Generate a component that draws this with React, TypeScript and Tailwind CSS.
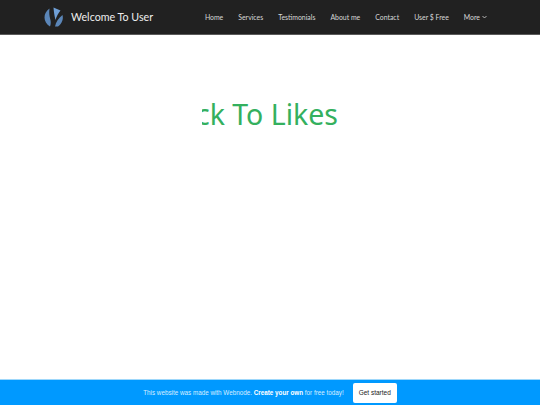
const links = ['Home', 'Services', 'Testimonials', 'About me', 'Contact', 'User $ Free']

function Logo() {
  return (
    <svg width="20" height="20" viewBox="0 0 20 20" className="shrink-0">
      <path d="M5.5 1.5C2 4 0.5 7 0.5 10.5C0.5 14 2.5 17.500 6 19.500C7 17 7 14.500 6.200 12C5.300 9 5 5 5.500 1.500Z" fill="#5b86b8" />
      <path d="M9.500 0.500L16.500 3.500C14.500 6 12.500 9 11.500 13C10.500 9 9.800 5 9.500 0.500Z" fill="#6f9fd6" />
      <path d="M18.500 8C19.500 11.500 18.500 16 14 19.500L11 19.500C11.800 15 14.500 11 18.500 8Z" fill="#5b86b8" />
    </svg>
  )
}

export default function App() {
  return (
    <div className="flex h-[405px] w-[540px] flex-col overflow-hidden bg-white font-['Lato',sans-serif]">
      <header className="flex h-[35px] shrink-0 items-center justify-between border-b border-[#5a5a5a] bg-[#212121] pl-[44px] pr-[53px]">
        <div className="flex items-center gap-[7px]">
          <Logo />
          <span className="whitespace-nowrap text-[10.700px] leading-none text-[#eeeeee]">Welcome To User</span>
        </div>
        <nav className="flex items-center gap-[15px] whitespace-nowrap text-[6.900px] text-[#d8d8d8]">
          {links.map((link) => (
            <a key={link}>{link}</a>
          ))}
          <a className="flex items-center gap-[2px]">
            More
            <svg width="5" height="4" viewBox="0 0 5 4" fill="none" stroke="#d8d8d8" strokeWidth="0.8">
              <path d="M0.500 1L2.500 3L4.500 1" />
            </svg>
          </a>
        </nav>
      </header>

      <main className="flex-1 pt-[58px]">
        <div className="mx-auto flex w-[136px] justify-end overflow-hidden">
          <h1 className="whitespace-nowrap font-['Noto_Sans',sans-serif] text-[28.500px] leading-[42px] text-[#34b05e]">Back To Likes</h1>
        </div>
      </main>

      <footer className="flex h-[26px] shrink-0 items-center justify-center gap-[9px] border-t border-[#9fd8fb] bg-[#0099ff] font-['Liberation_Sans',sans-serif] text-[6.300px] text-[#d8eeff]">
        <p className="whitespace-nowrap">
          This website was made with Webnode. <strong className="font-bold text-white">Create your own</strong> for free today!
        </p>
        <button className="h-[20px] rounded-[2px] bg-white px-[6px] text-[6.500px] text-[#222222]">Get started</button>
      </footer>
    </div>
  )
}
